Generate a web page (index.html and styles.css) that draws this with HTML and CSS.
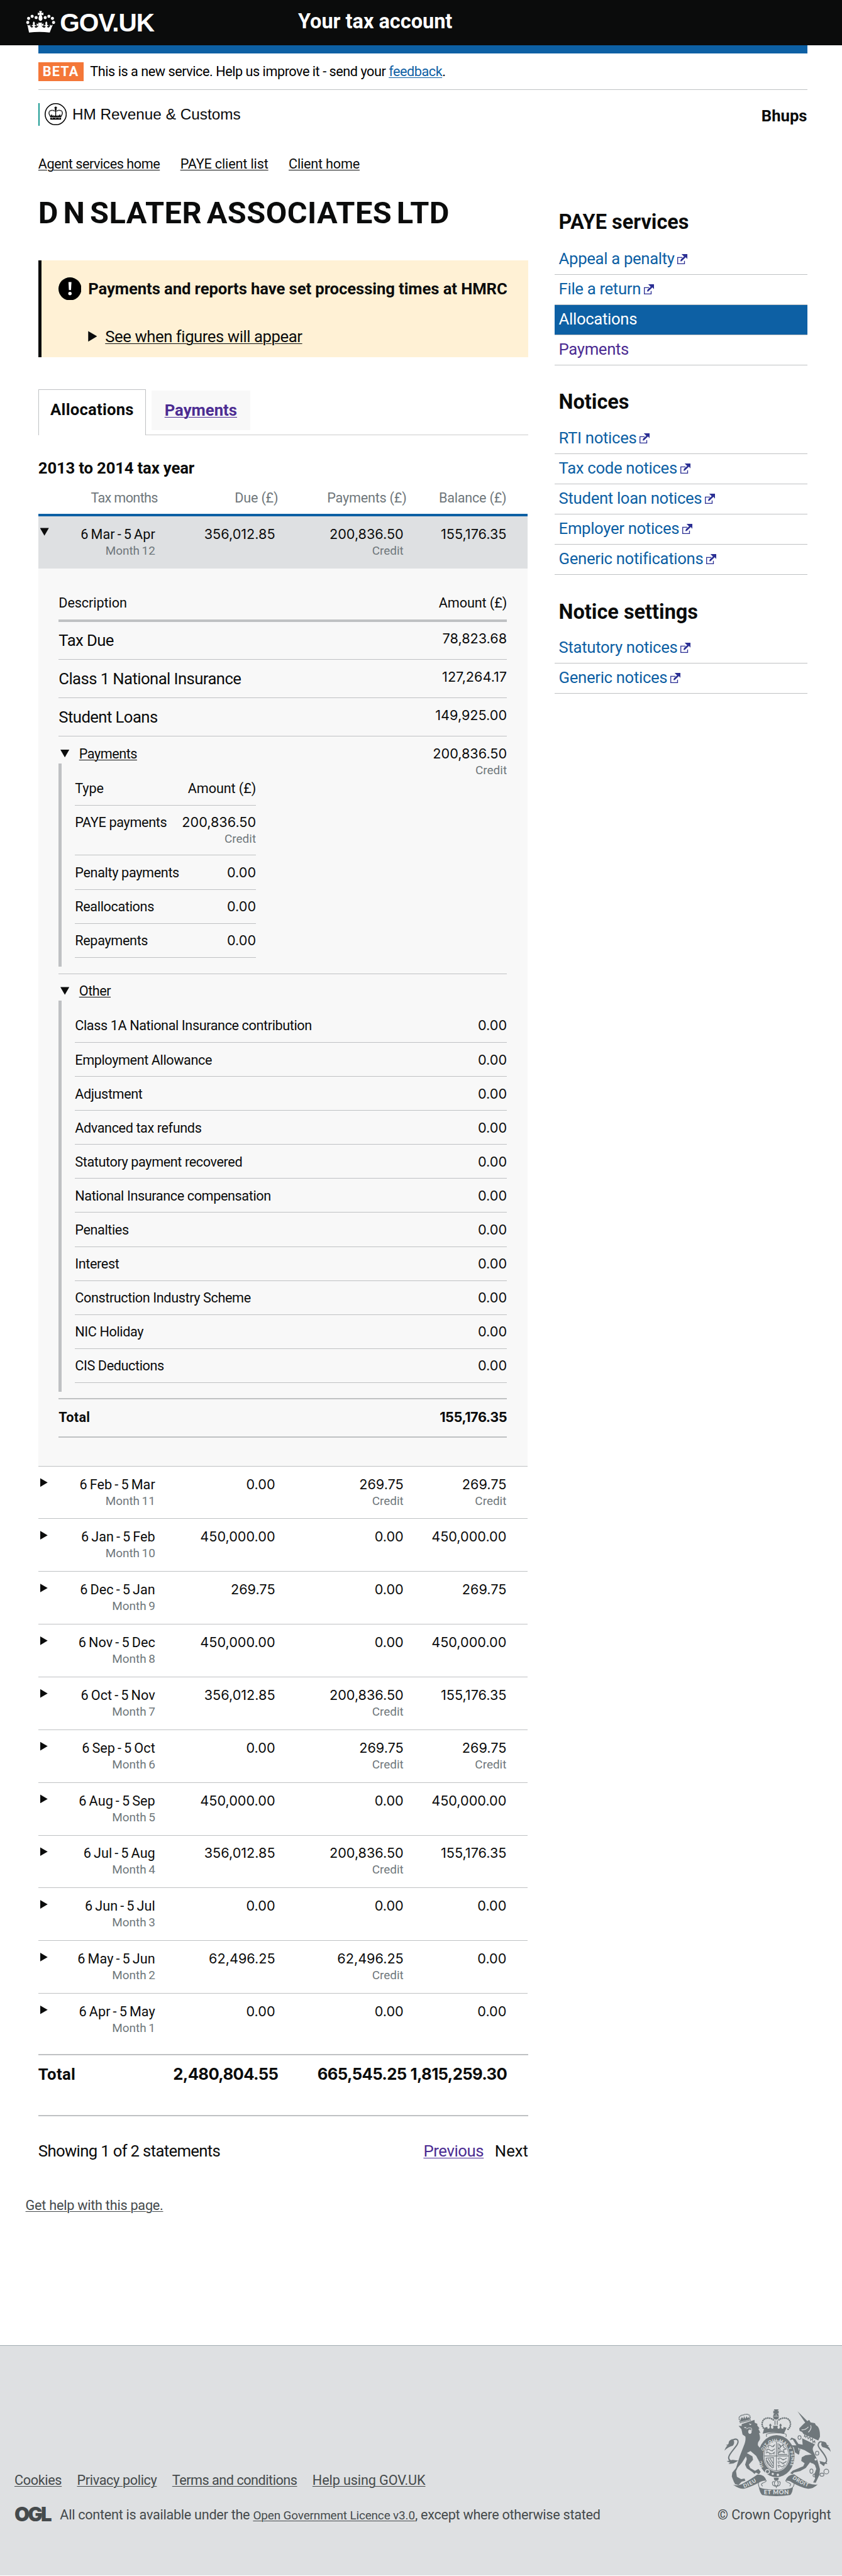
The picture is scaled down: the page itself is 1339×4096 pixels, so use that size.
FILE: index.html
```html
<!DOCTYPE html>
<html lang="en">
<head>
<meta charset="utf-8">
<title>Your tax account - GOV.UK</title>
<link rel="stylesheet" href="styles.css">
</head>
<body>
<svg width="0" height="0" class="defs" aria-hidden="true">
  <symbol id="ext" viewBox="0 0 24 24">
    <path d="M12 8H1v15h16v-7" fill="none" stroke="#2b2f94" stroke-width="2"/>
    <path d="M10 0h14v12l-4-4.500L10 17 7 16.500 9 12l7-6z" fill="#2b2f94"/>
  </symbol>
</svg>

<header class="top">
  <a class="brand" href="#">
    <svg class="crown" viewBox="30 45 210 160" fill="#fff" aria-hidden="true">
      <circle cx="44" cy="128" r="11"/><circle cx="50" cy="99" r="11"/><circle cx="75" cy="85" r="11"/><circle cx="103" cy="94" r="11"/>
      <circle cx="226" cy="128" r="11"/><circle cx="218" cy="99" r="11"/><circle cx="193" cy="85" r="11"/><circle cx="167" cy="94" r="11"/>
      <path d="M124 47h20l-4 15 14-4v19l-14-4c2 8 8 16 8 26 0 10-7 18-14 18s-14-8-14-18c0-10 6-18 8-26l-13 4V58l13 4z"/>
      <path d="M41 142l12 8 10-8c-4 10 0 19 8 21 7 1 11-3 10-8-2-4-8-3-9 1-2-9 4-14 11-11-5-12-4-16 4-25 8 9 9 13 4 25 7-3 13 2 11 11-1-4-7-5-9-1-1 7 4 11 12 9 8-2 13-9 15-16l-13 7v-20l14 6-4-12h28l-4 12 14-6v20l-13-7c2 7 7 14 15 16 8 2 13-2 12-9-2-4-8-3-9 1-2-9 4-14 11-11-5-12-4-16 4-25 8 9 9 13 4 25 7-3 13 2 11 11-1-4-7-5-9-1-1 5 3 9 10 8 8-2 12-11 8-21l10 8 12-8-22 57q-72-10-146 0z"/>
    </svg>
    <span class="brand-name">GOV.UK</span>
  </a>
  <span class="service">Your tax account</span>
</header>

<div class="wrap">
  <div class="bar"></div>
  <div class="phase">
    <strong class="tag">BETA</strong>
    <span>This is a new service. Help us improve it - send your <a href="#">feedback</a>.</span>
  </div>
  <div class="org">
    <div class="org-logo">
      <svg class="org-crest" viewBox="168 698 156 156" aria-hidden="true">
        <circle cx="246" cy="776" r="74.500" fill="#fff" stroke="#000" stroke-width="7"/>
        <path d="M242 722h8v5h5v8h-5l3 8-4 6v42h-6v-42l-4-6 3-8h-5v-8h5z"/>
        <path d="M242 755c-16-12-46-7-43 14 1 10 6 15 9 22M250 755c16-12 46-7 43 14-1 10-6 15-9 22" fill="none" stroke="#000" stroke-width="7" stroke-dasharray="5 1.500"/>
        <path d="M206 782l6 6 5-14 6 14 10-7-3 8 16-5 16 5-3-8 10 7 6-14 5 14 6-6v15H206zM208 800h76v15h-76z"/>
        <path d="M218 805h8M242 806h8M266 805h8" stroke="#fff" stroke-width="4"/>
      </svg>
      <span>HM Revenue &amp; Customs</span>
    </div>
    <strong class="user">Bhups</strong>
  </div>
  <nav class="crumbs"><a href="#">Agent services home</a><a href="#">PAYE client list</a><a href="#">Client home</a></nav>

  <div class="cols">
    <main class="main">
      <h1>D N SLATER ASSOCIATES LTD</h1>

      <section class="notice">
        <div class="notice-head">
          <svg class="warn" viewBox="0 0 54 54" aria-hidden="true"><circle cx="27" cy="27" r="27"/><path d="M23.500 11h7l-1 19h-5z" fill="#fff"/><circle cx="27" cy="38" r="4" fill="#fff"/></svg>
          <strong>Payments and reports have set processing times at HMRC</strong>
        </div>
        <div class="notice-more"><i class="tri tri-big"></i><a href="#">See when figures will appear</a></div>
      </section>

      <div class="tabs"><span class="tab tab-on">Allocations</span><a class="tab tab-off" href="#">Payments</a><span class="tab-rest"></span></div>

      <h2 class="year">2013 to 2014 tax year</h2>
      <div class="head"><span>Tax months</span><span>Due (£)</span><span>Payments (£)</span><span>Balance (£)</span></div>
      <div class="row row-open"><i class="tri tri-down"></i><div>6 Mar - 5 Apr<small>Month 12</small></div><div class="n">356,012.85</div><div class="n">200,836.50<small>Credit</small></div><div class="n">155,176.35</div></div>

      <div class="panel">
        <div class="p-head"><span>Description</span><span>Amount (£)</span></div>
        <div class="p-row"><span class="lg">Tax Due</span><span class="n">78,823.68</span></div>
        <div class="p-row"><span class="lg">Class 1 National Insurance</span><span class="n">127,264.17</span></div>
        <div class="p-row"><span class="lg">Student Loans</span><span class="n">149,925.00</span></div>
        <div class="group group-pay">
          <div class="g-body">
            <div class="g-sum"><i class="tri tri-down"></i><a href="#">Payments</a></div>
            <div class="g-list g-narrow">
              <div class="s-row s-first"><span>Type</span><span>Amount (£)</span></div>
              <div class="s-row s-tall"><span>PAYE payments</span><span class="n">200,836.50<small>Credit</small></span></div>
              <div class="s-row"><span>Penalty payments</span><span class="n">0.00</span></div>
              <div class="s-row"><span>Reallocations</span><span class="n">0.00</span></div>
              <div class="s-row"><span>Repayments</span><span class="n">0.00</span></div>
            </div>
          </div>
          <div class="g-amount n">200,836.50<small>Credit</small></div>
        </div>
        <div class="group group-other">
          <div class="g-body">
            <div class="g-sum"><i class="tri tri-down"></i><a href="#">Other</a></div>
            <div class="g-list g-long">
              <div class="s-row s-first"><span>Class 1A National Insurance contribution</span><span class="n">0.00</span></div>
              <div class="s-row"><span>Employment Allowance</span><span class="n">0.00</span></div>
              <div class="s-row"><span>Adjustment</span><span class="n">0.00</span></div>
              <div class="s-row"><span>Advanced tax refunds</span><span class="n">0.00</span></div>
              <div class="s-row"><span>Statutory payment recovered</span><span class="n">0.00</span></div>
              <div class="s-row"><span>National Insurance compensation</span><span class="n">0.00</span></div>
              <div class="s-row"><span>Penalties</span><span class="n">0.00</span></div>
              <div class="s-row"><span>Interest</span><span class="n">0.00</span></div>
              <div class="s-row"><span>Construction Industry Scheme</span><span class="n">0.00</span></div>
              <div class="s-row"><span>NIC Holiday</span><span class="n">0.00</span></div>
              <div class="s-row"><span>CIS Deductions</span><span class="n">0.00</span></div>
            </div>
          </div>
        </div>
        <div class="p-total"><span>Total</span><span class="n">155,176.35</span></div>
      </div>

      <div class="row"><i class="tri"></i><div>6 Feb - 5 Mar<small>Month 11</small></div><div class="n">0.00</div><div class="n">269.75<small>Credit</small></div><div class="n">269.75<small>Credit</small></div></div>
      <div class="row"><i class="tri"></i><div>6 Jan - 5 Feb<small>Month 10</small></div><div class="n">450,000.00</div><div class="n">0.00</div><div class="n">450,000.00</div></div>
      <div class="row"><i class="tri"></i><div>6 Dec - 5 Jan<small>Month 9</small></div><div class="n">269.75</div><div class="n">0.00</div><div class="n">269.75</div></div>
      <div class="row"><i class="tri"></i><div>6 Nov - 5 Dec<small>Month 8</small></div><div class="n">450,000.00</div><div class="n">0.00</div><div class="n">450,000.00</div></div>
      <div class="row"><i class="tri"></i><div>6 Oct - 5 Nov<small>Month 7</small></div><div class="n">356,012.85</div><div class="n">200,836.50<small>Credit</small></div><div class="n">155,176.35</div></div>
      <div class="row"><i class="tri"></i><div>6 Sep - 5 Oct<small>Month 6</small></div><div class="n">0.00</div><div class="n">269.75<small>Credit</small></div><div class="n">269.75<small>Credit</small></div></div>
      <div class="row"><i class="tri"></i><div>6 Aug - 5 Sep<small>Month 5</small></div><div class="n">450,000.00</div><div class="n">0.00</div><div class="n">450,000.00</div></div>
      <div class="row"><i class="tri"></i><div>6 Jul - 5 Aug<small>Month 4</small></div><div class="n">356,012.85</div><div class="n">200,836.50<small>Credit</small></div><div class="n">155,176.35</div></div>
      <div class="row"><i class="tri"></i><div>6 Jun - 5 Jul<small>Month 3</small></div><div class="n">0.00</div><div class="n">0.00</div><div class="n">0.00</div></div>
      <div class="row"><i class="tri"></i><div>6 May - 5 Jun<small>Month 2</small></div><div class="n">62,496.25</div><div class="n">62,496.25<small>Credit</small></div><div class="n">0.00</div></div>
      <div class="row row-last"><i class="tri"></i><div>6 Apr - 5 May<small>Month 1</small></div><div class="n">0.00</div><div class="n">0.00</div><div class="n">0.00</div></div>
      <div class="total"><span>Total</span><span class="n">2,480,804.55</span><span class="n">665,545.25</span><span class="n">1,815,259.30</span></div>

      <div class="pager"><span class="showing">Showing 1 of 2 statements</span><span class="pages"><a href="#">Previous</a><span>Next</span></span></div>
    </main>

    <aside class="side">
      <h2>PAYE services</h2>
      <ul>
        <li><a href="#">Appeal a penalty</a><svg><use href="#ext"/></svg></li>
        <li><a href="#">File a return</a><svg><use href="#ext"/></svg></li>
        <li class="current">Allocations</li>
        <li><a class="visited" href="#">Payments</a></li>
      </ul>
      <h2>Notices</h2>
      <ul>
        <li><a href="#">RTI notices</a><svg><use href="#ext"/></svg></li>
        <li><a href="#">Tax code notices</a><svg><use href="#ext"/></svg></li>
        <li><a href="#">Student loan notices</a><svg><use href="#ext"/></svg></li>
        <li><a href="#">Employer notices</a><svg><use href="#ext"/></svg></li>
        <li><a href="#">Generic notifications</a><svg><use href="#ext"/></svg></li>
      </ul>
      <h2>Notice settings</h2>
      <ul>
        <li><a href="#">Statutory notices</a><svg><use href="#ext"/></svg></li>
        <li><a href="#">Generic notices</a><svg><use href="#ext"/></svg></li>
      </ul>
    </aside>
  </div>
</div>
<div class="help"><a href="#">Get help with this page.</a></div>

<footer class="foot">
  <div class="foot-left">
    <nav class="foot-nav"><a href="#">Cookies</a><a href="#">Privacy policy</a><a href="#">Terms and conditions</a><a href="#">Help using GOV.UK</a></nav>
    <div class="licence"><span class="ogl">OGL</span><span>All content is available under the <a href="#">Open Government Licence v3.0</a>, except where otherwise stated</span></div>
  </div>
  <div class="foot-right">
    <svg class="arms" viewBox="192 138 750 612" fill="#6f777b" aria-hidden="true">
      <defs>
        <path id="garter" d="M468 546A104 122 0 1 1 652 544"/>
        <path id="dieu" d="M330 692Q392 670 440 630"/>
        <path id="droit" d="M670 626Q724 668 796 690"/>
      </defs>
      <!-- crown -->
      <path d="M541 138h34l-9 13 9-4v21l-10-4 8 10q6 14 2 24-4 12-19 12t-19-12q-4-10 2-24l8-10-10 4v-21l9 4z"/>
      <path d="M540 187h36M557 172v14" stroke="#dee0e2" stroke-width="3"/>
      <path d="M537 212C510 190 458 194 458 242q0 20 18 38M577 212C604 190 658 194 658 242q0 20-18 38" fill="none" stroke="#6f777b" stroke-width="12" stroke-linecap="round" stroke-dasharray="0.100 13.500"/>
      <path d="M546 216h6v32h-6zM562 216h6v32h-6z"/>
      <path d="M474 268l20-6 4 14 12-4 2-14-5-8 9-12 9 12-5 8 2 14 12 4 4-12-4-10h36l-4 10 4 12 12-4 2-14-5-8 9-12 9 12-5 8 2 14 12 4 4-14 20 6-18 42q-75-20-150 0z"/>
      <path d="M490 332q-8-22 10-22 58-12 116 0 18 0 10 22" fill="none" stroke="#6f777b" stroke-width="5"/>
      <!-- garter and shield -->
      <ellipse cx="559" cy="468" rx="128" ry="148"/>
      <ellipse cx="559" cy="467" rx="93" ry="110" fill="#dee0e2"/>
      <ellipse cx="559" cy="467" rx="87" ry="104" fill="none" stroke="#6f777b" stroke-width="4"/>
      <path d="M559 364v206M472 467h174" stroke="#6f777b" stroke-width="5"/>
      <g fill="none" stroke="#6f777b" stroke-width="5">
        <path d="M500 398q14-12 24 0t24-12M488 424q14-10 26 2t34-10M484 446q16-10 28 2t36-10M502 398v12M536 392v12M492 426v12M530 424v10M512 448v10M542 444v12"/>
        <path d="M570 376v80h66M578 382l14 18 14-14 4 20 16 12-18 6 6 20-18-12-20 12 10-20-12-12 14-4z"/>
        <path d="M486 482l52-4v70q-10 6-14-4-34-14-38-62zM500 486l34 54M514 484l22 36M490 498l36 48"/>
        <path d="M568 486q16-10 28 2t36-8M568 512q14-10 26 2t36-10M568 538q12-10 22 2t28-12M576 488v10M606 488v10M576 514v10M606 514v12M576 540v10"/>
      </g>
      <text fill="#dee0e2" font-family="Lato, sans-serif" font-weight="900" font-size="29"><textPath href="#garter" textLength="462">HONI SOIT QUI MAL Y PENSE</textPath></text>
      <circle cx="533" cy="594" r="8" fill="#dee0e2"/><circle cx="569" cy="600" r="8" fill="#dee0e2"/>
      <circle cx="496" cy="577" r="14" fill="none" stroke="#dee0e2" stroke-width="6"/>
      <!-- lion -->
      <path d="M300 220l70-16 4 10-70 18zM298 212q-10-28 26-34 36-14 48 8 4 12-2 20" fill="none" stroke="#6f777b" stroke-width="8" stroke-dasharray="7 3"/>
      <path d="M306 208l10-16 10 14 4-20 10 18 8-18 8 14 10-10 2 20-62 16z"/>
      <path d="M292 254l22 2 0-14 90-30 2 20 18 8 0 12 16 20-8 4 14 28-10 0q12 34 4 50-20 26-8 44l30 34 4 26-8 40-16 10-14-18-12-24-40-34-26 14 40 24 4 24-30 34 10 24 34 20 24-14 16 20-12 18-22-12-10 10-14-14-40-26-12-26 12-40-6-18-28 44-30 34-12 26 6 40 30 16 24-4 6 16-26 6-22 24-24-6-10-18-14-36 4-28 26-32q26-90 60-170 10-30 6-52l-20-14-8-38z"/>
      <path d="M330 262l20 2-12 8zM364 238l20 4-10 8z" fill="#dee0e2"/><ellipse cx="372" cy="296" rx="12" ry="15" fill="#dee0e2"/><path d="M346 276l18-8 18 2 4 18" fill="none" stroke="#dee0e2" stroke-width="4"/>
      <path d="M272 504Q222 510 222 478C226 438 302 390 286 356q-12-16-38 0" fill="none" stroke="#6f777b" stroke-width="9"/>
      <path d="M192 430q10-30 22-36l-12-4q22-4 20-16 0-16 26-26 24 20 4 46-34 8-60 36zM250 494l40 6-34 20-36 4 12-10-24-10z"/>
      <!-- unicorn -->
      <path d="M708 152l76 76-16 12z"/>
      <path d="M790 212l10 18 30 6 8 14q30 14 28 82l-12 26-104-46-10-14-18-8-2-18q22-22 34-34l18-14z"/>
      <path d="M736 282q28 4 48-20M800 250q12 22-16 50" fill="none" stroke="#dee0e2" stroke-width="5"/>
      <path d="M752 314l92 48-8 20-90-44z" fill="#dee0e2"/><path d="M756 334l2-16 9 18 8-16 8 26 12-14 6 26 12-14 4 28 12-12 2 18" fill="none" stroke="#6f777b" stroke-width="5"/>
      <path d="M740 342l92 44q-26 24-12 50l28 60 18 64-4 40-26 56-18-2 14-28-6-28 14-40-10-28-34-18-30 40-40 22-44 10-10 12-16-8 18-18 74-30 10-22-24-16 4-26 26-14 44-6-50-30-46-16 10 34-6 14-26-16-8-34-22-16 40 0-26-42-22 4 14-16 26 10 22 34 30 6z"/>
      <g fill="none" stroke="#6f777b" stroke-width="5"><ellipse cx="722" cy="337" rx="11" ry="13"/><ellipse cx="712" cy="420" rx="12" ry="16"/><ellipse cx="846" cy="447" rx="12" ry="14"/><ellipse cx="806" cy="574" rx="11" ry="15"/><ellipse cx="831" cy="604" rx="14" ry="11"/><ellipse cx="880" cy="599" rx="14" ry="11"/><circle cx="911" cy="577" r="17"/></g>
      <g fill="#dee0e2"><circle cx="836" cy="492" r="8"/><circle cx="814" cy="527" r="8"/></g>
      <path d="M866 516q52 12 46-26C898 440 846 410 854 386q6-28 30-16" fill="none" stroke="#6f777b" stroke-width="9"/>
      <path d="M942 438q-6-32-22-40l10-4q-18-4-18-14-2-14-28-16-18 24 0 40 38 6 58 34zM862 502l52 14 4 8-16-2-8 18-18-14z"/>
      <!-- ribbon -->
      <path d="M254 670q32 8 60-4 70-38 110-68 52-2 64 42-30 0-50 14-60 32-108 44-30 4-76-28zM850 668q-30 4-58-6-60-30-108-66-50 4-62 46 30-4 46 12 64 36 114 44 34 2 68-30z"/>
      <path d="M434 684q20 20 124 20t118-22q-2 44-20 60-98 16-196 0-16-8-26-58z"/>
      <path d="M488 640q-4 12-26 18-18 10 0 22M624 640q4 12 26 18 18 10 2 22M434 652q-6 14 4 34M684 652q2 18-8 34" fill="none" stroke="#6f777b" stroke-width="5"/>
      <g fill="#dee0e2" font-family="Lato, sans-serif" font-weight="900" font-size="36">
        <text><textPath href="#dieu" textLength="100">DIEU</textPath></text>
        <text><textPath href="#droit" textLength="126">DROIT</textPath></text>
        <text x="470" y="739" font-size="42" textLength="176">ET MON</text>
      </g>
      <!-- fleur-de-lis -->
      <path d="M540 620h36l-4 18h-28z"/>
      <path d="M558 634q-24 28-6 42-20 8-22-20 0-10 14-8M558 634q24 28 6 42 20 8 22-20 0-10-14-8M546 680h24M558 680v14" fill="none" stroke="#6f777b" stroke-width="5"/>
    </svg>
    <span>© Crown Copyright</span>
  </div>
</footer>
</body>
</html>
```
FILE: styles.css
```css
/* 1rem is the page's basic step; every size below scales from it */
html { font-size: 6.7626px; }
* { box-sizing: border-box; }
body {
  margin: 0;
  background: #fff;
  color: #0b0c0c;
  font: 3.2rem/4rem Roboto, "Liberation Sans", sans-serif;
  letter-spacing: -.016em;
}
a { color: inherit; text-decoration: underline; text-decoration-thickness: .2rem; text-underline-offset: .32rem; }
h1, h2, ul { margin: 0; padding: 0; }
svg { display: block; flex: none; }
.defs { position: absolute; }
.n { font-family: Inter, "Liberation Sans", sans-serif; letter-spacing: 0; }
small { display: block; font: 2.8rem/3.8rem Roboto, sans-serif; letter-spacing: 0; word-spacing: -.06em; color: #6f777b; }

.top { height: 10.6rem; background: #0b0c0c; color: #fff; display: flex; align-items: flex-start; padding-left: 6rem; }
.brand { display: flex; width: 64.1rem; color: #fff; text-decoration: none; }
.crown { width: 7rem; height: 5.35rem; margin: 2.45rem 1.1rem 0 0; }
.brand-name { font: bold 6rem/6rem "Liberation Sans", sans-serif; letter-spacing: -.028em; padding-top: 2.3rem; }
.service { font-size: 4.8rem; line-height: 5.6rem; font-weight: 700; letter-spacing: 0; padding-top: 2.4rem; }

.wrap { margin: 0 8.2rem 0 9rem; }
.bar { height: 2rem; background: #0d60a4; }
.phase { height: 8.6rem; display: flex; align-items: center; gap: 1.6rem; border-bottom: .2rem solid #bfc1c3; letter-spacing: -.021em; color: #000; }
.phase a { color: #0d60a4; }
.tag { background: #f47738; color: #fff; height: 4.4rem; width: 10.6rem; line-height: 4.5rem; text-align: center; letter-spacing: .055em; }
.org { display: flex; justify-content: space-between; height: 9.2rem; padding-top: 3rem; }
.org-logo { display: flex; align-items: center; height: 5.4rem; border-left: .4rem solid #1a9a92; padding-left: 1.2rem; gap: 1.3rem; font: 3.6rem/5.4rem "Liberation Sans", sans-serif; letter-spacing: 0; }
.org-crest { width: 5.2rem; height: 5.2rem; }
.user { font-size: 3.8rem; line-height: 6.2rem; letter-spacing: 0; }
.crumbs { display: flex; gap: 4.8rem; padding-top: 6.2rem; height: 13.2rem; letter-spacing: -.021em; }
.crumbs a:nth-child(2) { letter-spacing: -.007em; }
.crumbs a:nth-child(3) { letter-spacing: -.0095em; }

.cols { display: flex; justify-content: space-between; }
.main { width: 115.2rem; }
h1 { font-size: 7.2rem; line-height: 8rem; padding-top: 2.5rem; height: 17.6rem; letter-spacing: .009em; word-spacing: -.1em; white-space: nowrap; }

.notice { height: 22.8rem; border-left: .8rem solid #0b0c0c; background: #fff1d5; padding: 4rem 0 0 4rem; font-size: 3.8rem; }
.notice-head { display: flex; height: 5.4rem; align-items: center; gap: 1.6rem; letter-spacing: -.004em; white-space: nowrap; }
.notice-head strong { line-height: 5.8rem; }
.warn { width: 5.4rem; height: 5.4rem; }
.notice-more { display: flex; align-items: center; margin: 6.1rem 0 0 7rem; line-height: 4.8rem; gap: 1.9rem; letter-spacing: -.017em; }

.tabs { display: flex; height: 10.8rem; margin-top: 7.6rem; font-size: 3.8rem; font-weight: 700; }
.tab-on { width: 25.3rem; border: .2rem solid #bfc1c3; border-bottom: 0; padding: 2.2rem 0 0 2.7rem; line-height: 5rem; letter-spacing: .009em; }
.tab-off { align-self: flex-start; width: 23.2rem; margin: .2rem 0 0 1.3rem; height: 9.4rem; background: #f8f8f8; color: #4c2c92; padding: 2.2rem 0 0 3.1rem; line-height: 5rem; letter-spacing: 0; }
.tab-rest { flex: 1; border-bottom: .2rem solid #ccc; margin-left: -24.5rem; }

.year { font-size: 3.8rem; line-height: 5rem; letter-spacing: -.0065em; padding-top: 5.2rem; height: 12.6rem; }
.head { display: grid; grid-template-columns: 28.1rem 28.3rem 30.2rem 23.5rem; width: 115rem; height: 6.4rem; border-bottom: .6rem solid #0d60a4; color: #6f777b; text-align: right; letter-spacing: -.01em; }
.head span { line-height: 4rem; }
.head span:first-child { letter-spacing: -.03em; }

.row { position: relative; display: grid; grid-template-columns: 27.5rem 28.2rem 30.2rem 24.2rem; width: 115rem; height: 12.4rem; padding-top: 2.2rem; border-bottom: .2rem solid #bfc1c3; text-align: right; letter-spacing: .003em; word-spacing: -.065em; }
.row > .tri { position: absolute; left: .4rem; top: 2.75rem; }
.row-open { height: 12.3rem; background: #dee0e2; border-bottom: 0; }
.row-last { border-bottom: 0; height: 14.2rem; }

.tri { display: inline-block; flex: none; width: 1.8rem; height: 2.1rem; background: #0b0c0c; clip-path: polygon(0 0, 100% 50%, 0 100%); }
.tri-big { width: 2.1rem; height: 2.5rem; }
.tri-down { width: 2.1rem; height: 1.8rem; clip-path: polygon(0 0, 100% 0, 50% 100%); }

.panel { width: 115rem; height: 211.1rem; padding: 5.5rem 4.8rem 0; background: #f8f8f8; border-bottom: .2rem solid #bfc1c3; }
.p-head, .p-row, .p-total, .s-row { display: flex; justify-content: space-between; }
.p-head { height: 7rem; padding-top: .6rem; border-bottom: .6rem solid #bfc1c3; letter-spacing: -.004em; }
.p-row { height: 9rem; padding-top: 2rem; border-bottom: .2rem solid #bfc1c3; }
.lg { font-size: 3.8rem; line-height: 4.8rem; letter-spacing: -.0225em; }
.group { display: flex; justify-content: space-between; padding-top: 2rem; }
.group-pay { height: 55.8rem; border-bottom: .2rem solid #bfc1c3; }
.group-other { height: 99.8rem; }
.group-other .g-body { flex: 1; }
.g-sum { display: flex; align-items: center; height: 4rem; padding-left: .4rem; gap: 2.3rem; letter-spacing: -.022em; }
.g-list { margin-top: .3rem; border-left: .8rem solid #bfc1c3; padding-left: 3.1rem; }
.g-narrow { width: 46.4rem; height: 47.8rem; }
.g-narrow .s-first { letter-spacing: -.004em; }
.g-long { height: 92rem; letter-spacing: -.018em; }
.g-amount, .s-row > :last-child { text-align: right; }
.s-row { height: 8rem; padding-top: 2rem; border-bottom: .2rem solid #bfc1c3; }
.s-first { height: 9.9rem; padding-top: 3.9rem; }
.s-tall { height: 11.8rem; }
.p-total { height: 9.2rem; padding-top: 2.2rem; border: solid #bfc1c3; border-width: .4rem 0; font-weight: 700; letter-spacing: .015em; }
.p-total .n { letter-spacing: -.02em; }

.total { display: grid; grid-template-columns: 27.5rem 28.9rem 30.2rem 23.6rem; height: 14.6rem; padding-top: 2rem; border: solid #bfc1c3; border-width: .4rem 0; font-size: 3.8rem; line-height: 4.8rem; font-weight: 700; text-align: right; letter-spacing: .015em; }
.total span:first-child { text-align: left; }
.total .n { letter-spacing: -.026em; }

.pager { display: flex; justify-content: space-between; padding-top: 5.8rem; font-size: 3.8rem; line-height: 4.8rem; letter-spacing: -.0257em; }
.pages { display: flex; gap: 2.6rem; letter-spacing: -.015em; }
.pages span { letter-spacing: 0; }
.pages a { color: #4c2c92; }

.side { width: 59.4rem; font-size: 3.8rem; line-height: 4.8rem; letter-spacing: -.0125em; }
.side h2 { font-size: 4.8rem; line-height: 6rem; padding: 5.7rem 0 0 1rem; height: 13.8rem; letter-spacing: 0; }
.side h2:first-child { height: 13.9rem; }
.side ul { list-style: none; }
.side li { display: flex; align-items: center; height: 7.1rem; padding: 0 0 .4rem 1rem; gap: .7rem; border-bottom: .2rem solid #bfc1c3; }
.side li svg { width: 2.4rem; height: 2.4rem; margin-top: .3rem; }
.side li a { color: #0d60a4; text-decoration: none; }
.side li .visited { color: #4c2c92; }
.side .current { background: #0d60a4; color: #fff; }

.help { height: 43.2rem; padding: 8.4rem 0 0 6rem; color: #454a4c; letter-spacing: -.011em; }

.foot { height: 54.2rem; display: flex; justify-content: space-between; padding: 0 2.6rem 0 3.4rem; background: #dee0e2; border-top: .2rem solid #a1acb2; color: #454a4c; }
.foot-left { padding-top: 29.7rem; }
.foot-nav { display: flex; gap: 3.6rem; letter-spacing: -.016em; }
.foot-nav a:nth-child(3) { letter-spacing: -.022em; }
.foot-nav a:nth-child(4) { letter-spacing: -.005em; }
.licence { display: flex; padding-top: 4rem; letter-spacing: -.0125em; white-space: nowrap; }
.licence a { font-size: 2.8rem; letter-spacing: -.0075em; }
.ogl { width: 10.7rem; font: 900 4.6rem/4rem Inter, sans-serif; letter-spacing: -.09em; }
.foot-right { display: flex; flex-direction: column; align-items: flex-end; padding-top: 15rem; letter-spacing: -.004em; }
.arms { width: 25rem; height: 20.4rem; margin-bottom: 2.3rem; }
```
